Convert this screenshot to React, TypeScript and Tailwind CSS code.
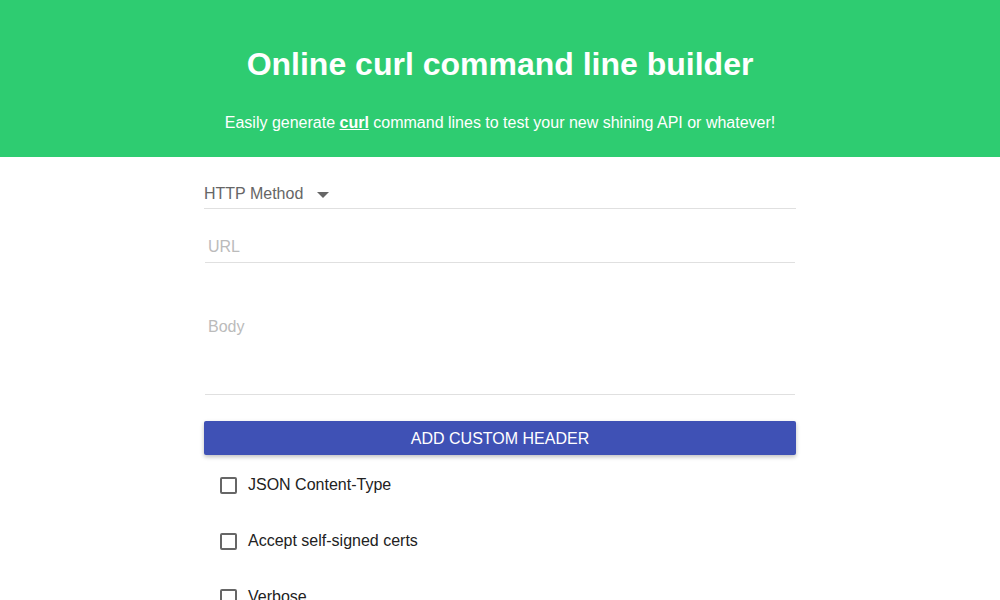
import React, { useState } from 'react';

const CHECKS = ['JSON Content-Type', 'Accept self-signed certs', 'Verbose'];

export default function App() {
  const [checked, setChecked] = useState<Record<string, boolean>>({});

  return (
    <div className="min-h-screen bg-white font-['Liberation_Sans',Arial,sans-serif]">
      <header className="bg-[#2ecc71] text-white text-center h-[157px] pt-[44px]">
        <h1 className="text-[32px] font-bold leading-[40px]">Online curl command line builder</h1>
        <p className="mt-[27px] text-[16px] leading-[24px]">
          Easily generate <a className="font-bold underline">curl</a> command lines to test your new shining API or whatever!
        </p>
      </header>

      <main className="w-[592px] mx-auto">
        <div className="flex items-center h-[52px] pt-[23px] border-b border-[#e0e0e0]">
          <span className="text-[16px] text-[#666] leading-[24px]">HTTP Method</span>
          <svg className="ml-[14px] mt-[2px]" width="12" height="6" viewBox="0 0 12 6">
            <path d="M0 0h12L6 6z" fill="#666" />
          </svg>
        </div>

        <div className="mx-[1px] h-[54px] pt-[26px] border-b border-[#e0e0e0]">
          <input
            placeholder="URL"
            className="w-full px-[3px] text-[16px] leading-[24px] outline-none placeholder:text-[#bbb]"
          />
        </div>

        <div className="mx-[1px] h-[132px] pt-[52px] border-b border-[#e0e0e0]">
          <textarea
            placeholder="Body"
            className="w-full h-[60px] px-[3px] text-[16px] leading-[24px] outline-none resize-none placeholder:text-[#bbb]"
          />
        </div>

        <button className="mt-[26px] w-full h-[34px] pt-[1px] bg-[#3f51b5] text-white text-[16px] font-medium rounded-[2px] shadow-[0_2px_4px_rgba(0,0,0,0.25)]">
          ADD CUSTOM HEADER
        </button>

        <div className="pl-[16px] pt-[18px] flex flex-col gap-[32px]">
          {CHECKS.map((c) => (
            <label key={c} className="flex items-center h-[24px] cursor-pointer">
              <span
                onClick={() => setChecked({ ...checked, [c]: !checked[c] })}
                className={`w-[17px] h-[17px] border-2 rounded-[2px] ${checked[c] ? 'bg-[#3f51b5] border-[#3f51b5]' : 'border-[#666]'}`}
              />
              <span className="ml-[11px] text-[16px] text-[#222] leading-[24px]">{c}</span>
            </label>
          ))}
        </div>
      </main>
    </div>
  );
}
